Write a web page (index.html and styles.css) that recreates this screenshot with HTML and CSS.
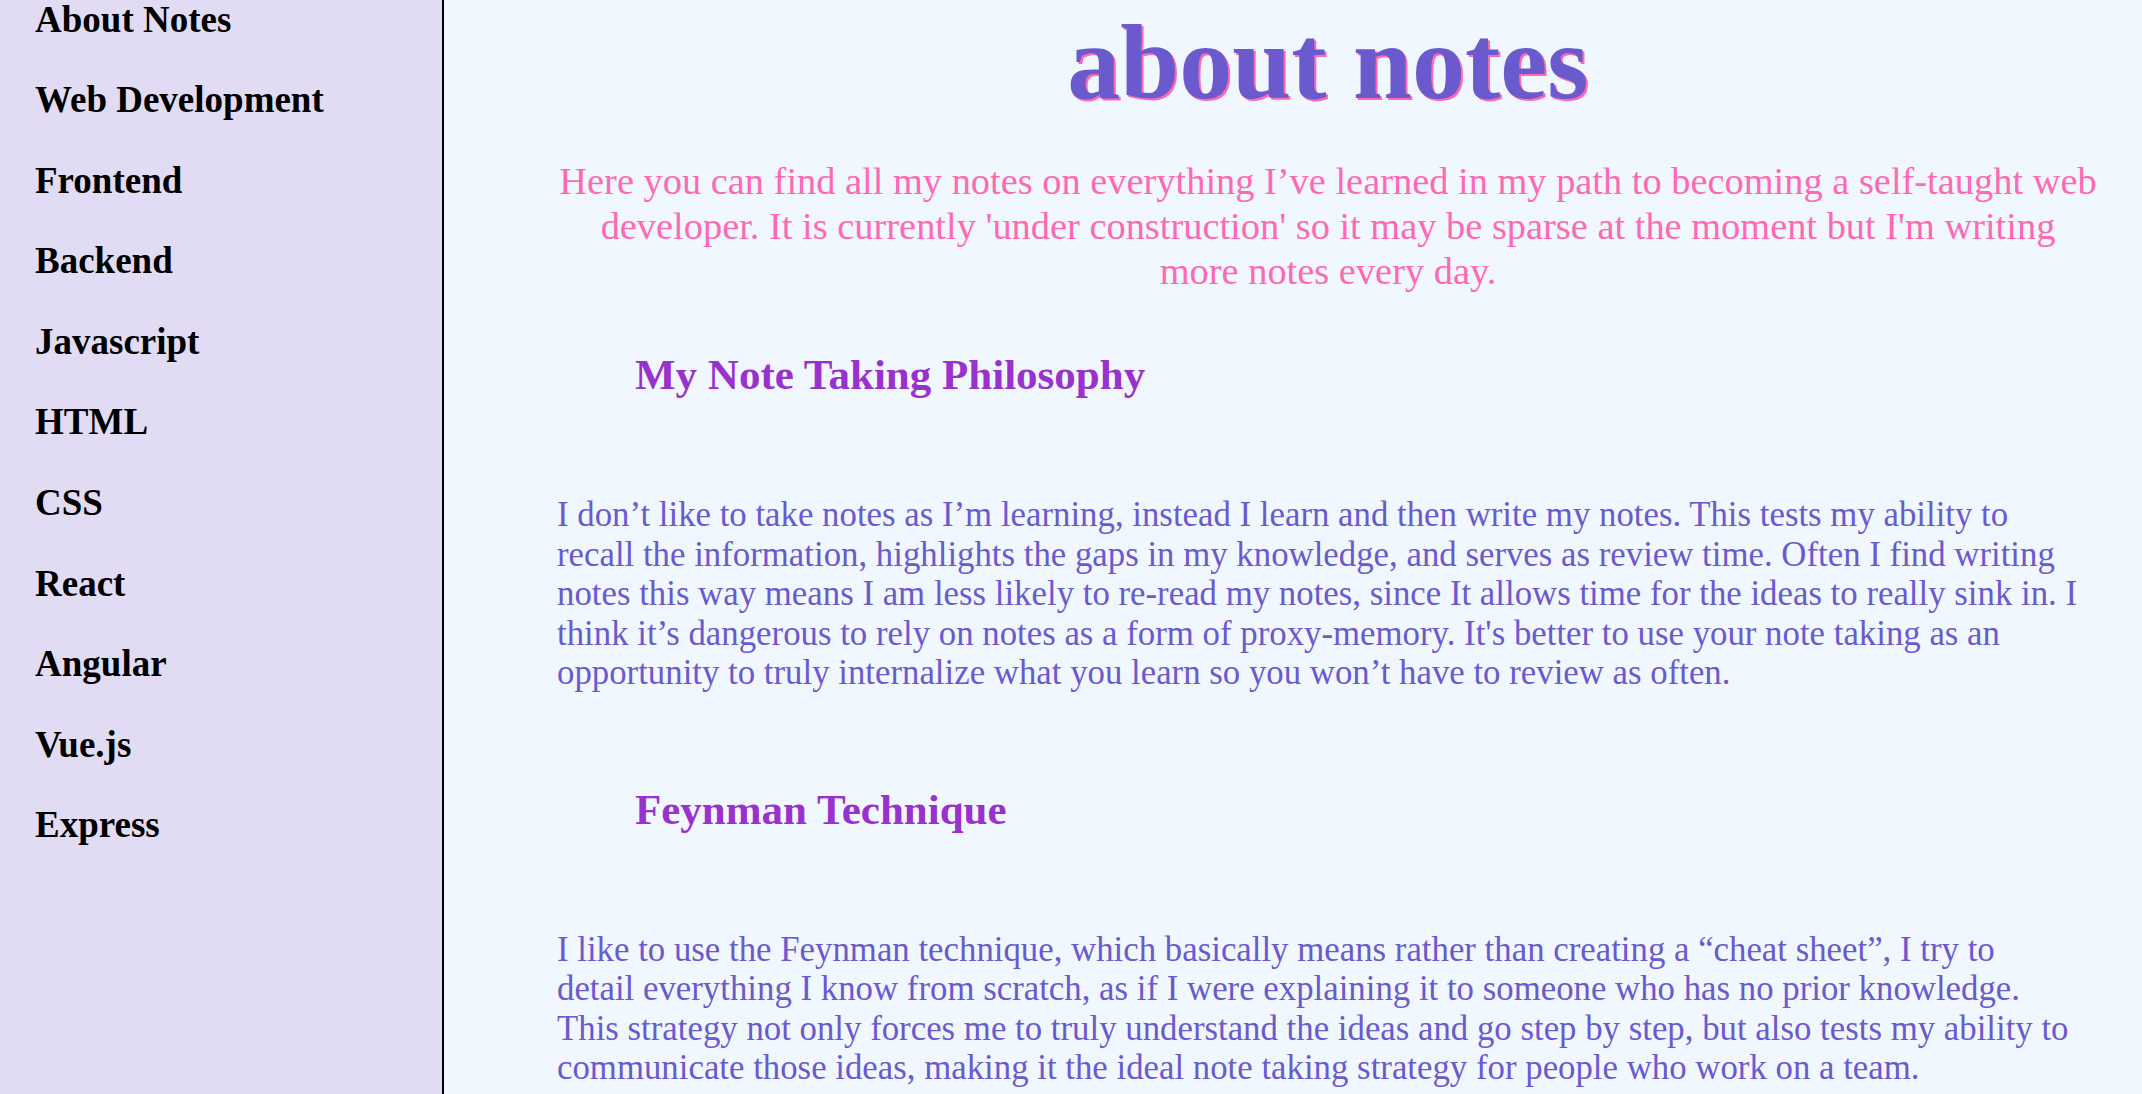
FILE: index.html
```html
<!DOCTYPE html>
<html lang="en">
<head>
<meta charset="utf-8">
<title>about notes</title>
<link rel="stylesheet" href="styles.css">
</head>
<body>
<div class="page">
  <nav class="sidebar">
    <ul class="nav-list">
      <li class="nav-item">About Notes</li>
      <li class="nav-item">Web Development</li>
      <li class="nav-item">Frontend</li>
      <li class="nav-item">Backend</li>
      <li class="nav-item">Javascript</li>
      <li class="nav-item">HTML</li>
      <li class="nav-item">CSS</li>
      <li class="nav-item">React</li>
      <li class="nav-item">Angular</li>
      <li class="nav-item">Vue.js</li>
      <li class="nav-item">Express</li>
    </ul>
  </nav>
  <main class="content">
    <h1 class="title">about notes</h1>
    <p class="intro">Here you can find all my notes on everything I’ve learned in my path to becoming a self-taught web developer. It is currently 'under construction' so it may be sparse at the moment but I'm writing more notes every day.</p>
    <h2 class="note-heading">My Note Taking Philosophy</h2>
    <p class="note-text">I don’t like to take notes as I’m learning, instead I learn and then write my notes. This tests my ability to<br>recall the information, highlights the gaps in my knowledge, and serves as review time. Often I find writing<br>notes this way means I am less likely to re-read my notes, since It allows time for the ideas to really sink in. I<br>think it’s dangerous to rely on notes as a form of proxy-memory. It's better to use your note taking as an<br>opportunity to truly internalize what you learn so you won’t have to review as often.</p>
    <h2 class="note-heading">Feynman Technique</h2>
    <p class="note-text">I like to use the Feynman technique, which basically means rather than creating a “cheat sheet”, I try to<br>detail everything I know from scratch, as if I were explaining it to someone who has no prior knowledge.<br>This strategy not only forces me to truly understand the ideas and go step by step, but also tests my ability to<br>communicate those ideas, making it the ideal note taking strategy for people who work on a team.</p>
  </main>
</div>
</body>
</html>
```
FILE: styles.css
```css
html, body {
  margin: 0;
  padding: 0;
  height: 100%;
  overflow: hidden;
}

body {
  font-family: "Liberation Serif", "Times New Roman", serif;
  background: #f0f7ff;
}

.page {
  display: flex;
  min-height: 100%;
}

.sidebar {
  width: 442px;
  flex: 0 0 442px;
  background: #e1dcf4;
  border-right: 2px solid #000;
  min-height: 1094px;
}

.nav-list {
  list-style: none;
  margin: 0;
  padding: 1.5px 0 0 35px;
  display: flex;
  flex-direction: column;
  gap: 45.6px;
}

.nav-item {
  font-size: 37px;
  font-weight: bold;
  line-height: 35px;
  color: #000;
}

.content {
  flex: 1;
  min-width: 0;
  padding: 0 43px 0 113px;
  background: #f0f7ff;
}

.title {
  margin: 0;
  text-align: center;
  font-size: 106px;
  line-height: 125px;
  font-weight: bold;
  color: #6a5acd;
  text-shadow: 2px 2px 0 #ff69b4;
}

.intro {
  margin: 34px 0 56px;
  text-align: center;
  font-size: 38.4px;
  line-height: 45px;
  color: #ff69b4;
}

.note-heading {
  margin: 0 0 96px;
  padding-left: 78px;
  font-size: 43px;
  line-height: 49px;
  font-weight: bold;
  color: #9932cc;
}

.note-text {
  margin: 0 0 92px;
  font-size: 34.8px;
  line-height: 39.5px;
  color: #6a5acd;
  white-space: nowrap;
}
```
